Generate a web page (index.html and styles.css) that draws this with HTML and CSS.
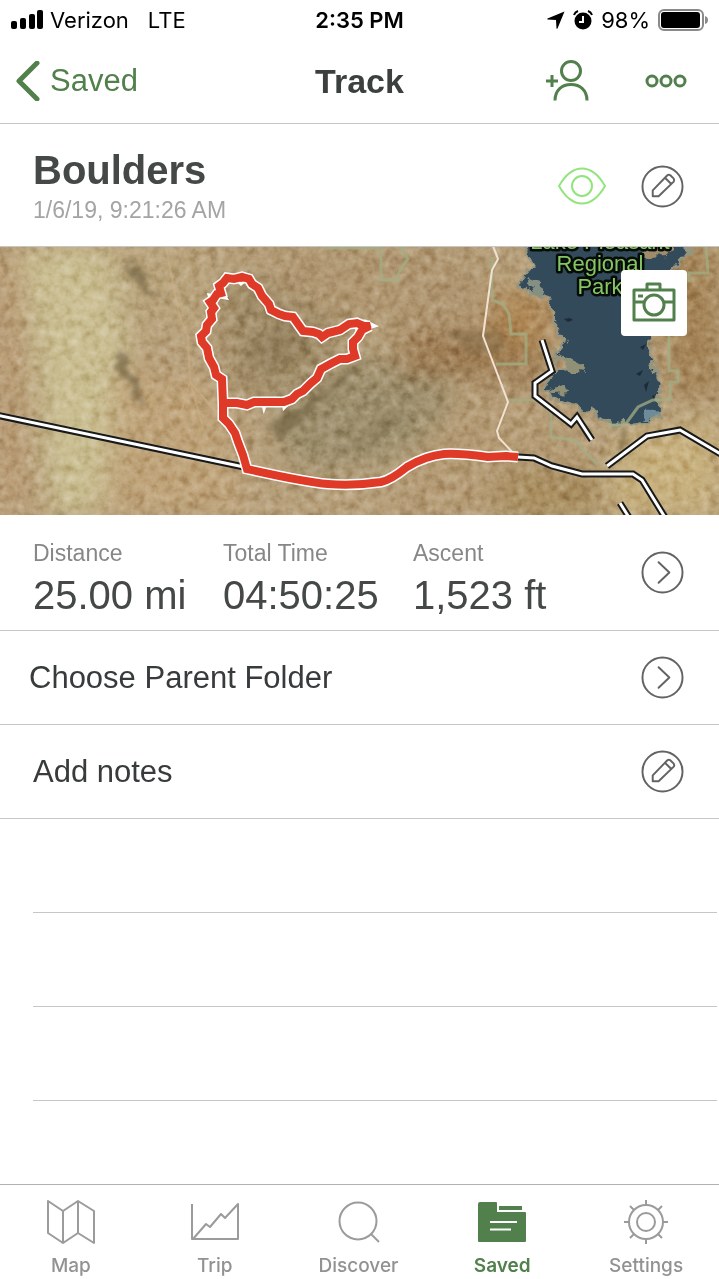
FILE: index.html
```html
<!DOCTYPE html>
<html lang="en">
<head>
    <meta charset="utf-8">
    <meta name="viewport" content="width=device-width, initial-scale=1">
    <title>Track</title>
    <link rel="stylesheet" href="styles.css">
</head>
<body>
    <!-- shared icons -->
    <svg class="defs" width="0" height="0">
        <symbol id="icon-pencil" viewBox="0 0 44 44">
            <circle cx="22" cy="22" r="20.500"/>
            <path d="M12 32V26L27 10.500Q28.500 9.500 30 10.500L33.500 14Q34.500 15.500 33.500 17L18 32ZM24.500 13L31 19.500"/>
        </symbol>
        <symbol id="icon-next" viewBox="0 0 44 44">
            <circle cx="22" cy="22" r="20.500"/>
            <path d="M18 11.500L29 22L18 32.500"/>
        </symbol>
    </svg>

    <div class="status">
        <div class="carrier">
            <svg width="32" height="20" viewBox="0 0 32 20">
                <rect x="0" y="11" width="6" height="8" rx="2"/>
                <rect x="9" y="8" width="6" height="11" rx="2"/>
                <rect x="18" y="4" width="6" height="15" rx="2"/>
                <rect x="26" y="0" width="6" height="19" rx="2"/>
            </svg>
            <span>Verizon</span>
            <span class="network">LTE</span>
        </div>
        <div class="clock">2:35 PM</div>
        <div class="power">
            <svg width="18" height="18" viewBox="0 0 18 18"><path d="M17.500 0.500L10.500 17.500Q10 18 9.500 17.500L9 9L0.500 8.500Q0 8 0.500 7.500Z"/></svg>
            <svg width="20" height="20" viewBox="0 0 20 20">
                <circle cx="10" cy="11" r="8.500"/>
                <path d="M1 5Q2 2 5 1M15 1Q18 2 19 5" fill="none" stroke="#000" stroke-width="2"/>
                <path d="M10 6V12H6" fill="none" stroke="#fff" stroke-width="2"/>
            </svg>
            <span>98%</span>
            <svg width="50" height="22" viewBox="0 0 50 22">
                <rect x="1" y="1" width="44" height="20" rx="5" fill="none" stroke="#8a8a8a" stroke-width="2"/>
                <rect x="3" y="3" width="39" height="16" rx="3"/>
                <path d="M47 7Q50 8 50 11Q50 14 47 15Z" fill="#8a8a8a"/>
            </svg>
        </div>
    </div>

    <header class="navbar">
        <a class="back" href="#saved">
            <svg width="24" height="40" viewBox="0 0 24 40"><path d="M21 2L3 20L21 38"/></svg>
            Saved
        </a>
        <h1>Track</h1>
        <div class="nav_buttons">
            <button type="button" aria-label="Share with a friend">
                <svg width="44" height="42" viewBox="0 0 44 42" stroke-width="3">
                    <circle cx="26" cy="11" r="9.500"/>
                    <path d="M10 40.500C10 30 17 24.500 26 24.500S42 30 42 40.500M1 21H13M7 15V27"/>
                </svg>
            </button>
            <button type="button" aria-label="More">
                <svg width="42" height="14" viewBox="0 0 42 14" stroke-width="3">
                    <circle cx="7" cy="7" r="5"/><circle cx="21" cy="7" r="5"/><circle cx="35" cy="7" r="5"/>
                </svg>
            </button>
        </div>
    </header>

    <main>
        <section class="title_row">
            <div>
                <h2>Boulders</h2>
                <p>1/6/19, 9:21:26 AM</p>
            </div>
            <div class="title_buttons">
                <button class="eye" type="button" aria-label="Show on map">
                    <svg width="48" height="38" viewBox="0 0 48 38">
                        <path d="M1 19Q11 1.500 24 1.500T47 19Q37 36.500 24 36.500T1 19Z"/>
                        <circle cx="24" cy="19" r="10"/>
                    </svg>
                </button>
                <button class="round" type="button" aria-label="Edit name"><svg><use href="#icon-pencil"/></svg></button>
            </div>
        </section>

        <section class="map">
            <svg class="terrain" viewBox="0 0 719 268" preserveAspectRatio="xMidYMid slice" role="img" aria-label="Track map">
                <defs>
                    <filter id="soft" x="-30%" y="-30%" width="160%" height="160%"><feGaussianBlur stdDeviation="14"/></filter>
                    <filter id="smudge" x="-20%" y="-20%" width="140%" height="140%" color-interpolation-filters="sRGB">
                        <feTurbulence type="fractalNoise" baseFrequency="0.06" numOctaves="3" seed="8" result="n"/>
                        <feDisplacementMap in="SourceGraphic" in2="n" scale="20" xChannelSelector="R" yChannelSelector="G"/>
                        <feGaussianBlur stdDeviation="2"/>
                    </filter>
                    <filter id="shore" x="-10%" y="-10%" width="120%" height="120%" color-interpolation-filters="sRGB">
                        <feTurbulence type="fractalNoise" baseFrequency="0.09" numOctaves="3" seed="5" result="n"/>
                        <feDisplacementMap in="SourceGraphic" in2="n" scale="16" xChannelSelector="R" yChannelSelector="G"/>
                        <feGaussianBlur stdDeviation="0.6"/>
                    </filter>
                    <filter id="grain" x="0" y="0" width="100%" height="100%" color-interpolation-filters="sRGB">
                        <feTurbulence type="fractalNoise" baseFrequency="0.11" numOctaves="5" seed="31"/>
                        <feColorMatrix values="0.9 0.6 0 0 -0.23  0.9 0.6 0 0 -0.23  0.9 0.6 0 0 -0.23  0 0 0 0 1"/>
                    </filter>
                </defs>
                <rect width="719" height="268" fill="#b59e79"/>
                <g filter="url(#soft)">
                    <path d="M0 0H18L25 268H0Z" fill="#b99a72"/>
                    <path d="M20 0H110L130 100L100 268H50L35 100Z" fill="#c9bd91"/>
                    <path d="M115 120L215 140L245 268H105Z" fill="#bda177"/>
                    <path d="M110 0H210L200 90L130 70Z" fill="#b7a27a"/>
                    <path d="M215 40L250 30L350 80L310 140L235 150Z" fill="#9e8965"/>
                    <path d="M260 0H480V90L380 70L290 50Z" fill="#af956f"/>
                    <path d="M270 160L360 110L440 120L460 180L380 220H290Z" fill="#9c8e6c"/>
                    <path d="M400 85H545V135L480 130H400Z" fill="#9c7a51"/>
                    <path d="M490 45H550V100H490Z" fill="#aa8250"/>
                    <path d="M480 135L560 145L600 180L580 268H400V215Z" fill="#b39a73"/>
                    <path d="M660 0H719V150H670Z" fill="#a38254"/>
                    <path d="M620 190L719 170V268H610Z" fill="#c6af7b"/>
                    <path d="M500 225H600V268H500Z" fill="#a68b5c"/>
                </g>
                <rect class="noise" width="719" height="268" filter="url(#grain)"/>
                <!-- rocky patches -->
                <g filter="url(#smudge)" fill="#6b5c3c" opacity=".6">
                    <path d="M113 112L122 107L130 120L140 137V155L130 147L125 130Z"/>
                    <path d="M128 12L138 20L148 40L160 52L147 47L135 35Z"/>
                    <path d="M272 178L305 155L345 128L368 108L360 122L325 150L278 189Z"/>
                    <path d="M278 188L308 165L287 192Z"/>
                    <path d="M300 235L390 165L410 172L360 205Z" opacity=".3"/>
                    <path d="M445 85L500 83L505 108L470 103Z" opacity=".5"/>
                    <path d="M617 205L622 190L630 184L626 197Z"/>
                    <path d="M240 105L290 70L315 100L270 130Z" opacity=".25"/>
                </g>
                <path d="M166 0L177 58L180 70L188 90L190 135L216 165M190 135L180 170M190 135L203 180" fill="none" stroke="#cdb083" stroke-width="2" opacity=".5"/>

                <!-- lake -->
                <g filter="url(#shore)">
                    <path d="M521 -8L532 20L520 35L530 48L547 52L554 66L555 82L562 98L553 107L570 122L552 128L542 143L562 155L588 163L608 175L634 178L658 172L659 128L648 110L654 88L668 70V30L689 5V-8Z" fill="#334a5b" stroke="#96957f" stroke-width="3"/>
                    <path d="M557 107L575 114L585 126L570 124ZM546 145L558 137L572 145L553 146Z" fill="#8f9075"/>
                    <path d="M528 32L540 35L545 49L534 50Z" fill="#859082"/>
                    <path d="M636 -5H670L668 10L645 11Z" fill="#a08c6b"/>
                    <path d="M640 172L646 163L658 162L657 172Z" fill="#6d8b98"/>
                </g>
                <g fill="#16242d" opacity=".8">
                    <path d="M564 72L570 71L573 73L568 75ZM636 127L643 123L640 129ZM644 138L649 134L646 145ZM640 100L646 97L643 103ZM652 149L656 147L654 154Z"/>
                </g>

                <!-- park boundary -->
                <path class="boundary" d="M325 1H381V33H398V27L402 20L408 12L403 4V0M400 0L408 12M492 10V53L503 57L509 67L511 87H526V117H496M508 153H539L551 165V190L575 193L586 206L598 218M607 178H625L638 160L653 153H670V135H678V124H669V88L667 70M689 35V26H708L706 0"/>

                <!-- thin road -->
                <path d="M493 -1L498 12L492 23L483 89L508 155L497 184L499 191L516 209" fill="none" stroke="#f1e2d2" stroke-width="2"/>

                <g class="road">
                    <path d="M-4 168L244 220M518 210L534 211L552 219L582 227H633L642 233L666 272M607 219L647 189L680 183L724 209M542 93L552 124L535 136V149L571 177L577 170L592 193M620 256L630 272"/>
                </g>
                <g class="road_inner">
                    <path d="M-4 168L244 220M518 210L534 211L552 219L582 227H633L642 233L666 272M607 219L647 189L680 183L724 209M542 93L552 124L535 136V149L571 177L577 170L592 193M620 256L630 272"/>
                </g>

                <g class="track">
                    <path id="track" d="M518 210L506 209L488 210Q458 206 444 207Q425 209 407 220Q391 233 381 235Q354 239 328 237Q305 235 247 222L243 208L238 195L235 186L229 177L223 171V156L222 132L216 128L214 120L209 111L207 101L202 95L201 89L206 84L207 78L212 72L211 65L214 61L210 55L213 53L217 47L221 46L219 39L223 36L227 31L234 32L242 30L249 32L252 37L258 41L262 49L269 57L271 63L279 67L285 69L293 70L298 77L303 84L313 85L319 87L322 90L328 86L340 83L349 77L357 76L364 79L370 79L362 83L358 90L353 95L353 102L355 109L347 112L340 112L332 116L321 122L317 131L310 137L303 144L297 147L292 152L284 155L274 155L264 155L254 155L247 158L237 156H223"/>
                    <path d="M211 54L209 48L221 50L226 51L221 43ZM235 30L242 28L246 33L241 37L238 34ZM350 76L365 74L375 79L359 84ZM283 154L284 161L291 154ZM262 154L264 162L267 154Z"/>
                </g>
                <use class="track_line" href="#track"/>
                <path d="M212 54L221 48L223 43ZM236 31L242 30L245 34L241 35ZM354 76L372 79L361 82Z" fill="#df3a27"/>

                <text class="place" y="2"><tspan x="600">Lake Pleasant</tspan><tspan x="600" dy="22">Regional</tspan><tspan x="600" dy="23">Park</tspan></text>
            </svg>
            <button class="camera" type="button" aria-label="Add photo">
                <svg width="44" height="42" viewBox="0 0 44 42">
                    <path d="M2 8H42V38H2ZM15 8V2H28V8M2 20H12M32 20H42M6 14H11"/>
                    <circle cx="22" cy="23" r="10"/>
                </svg>
            </button>
        </section>

        <section class="stats">
            <dl>
                <div><dt>Distance</dt><dd>25.00 mi</dd></div>
                <div><dt>Total Time</dt><dd>04:50:25</dd></div>
                <div><dt>Ascent</dt><dd>1,523 ft</dd></div>
            </dl>
            <button class="round" type="button" aria-label="All statistics"><svg><use href="#icon-next"/></svg></button>
        </section>
        <button class="row folder" type="button">
            Choose Parent Folder
            <span class="round"><svg><use href="#icon-next"/></svg></span>
        </button>
        <button class="row" type="button">
            Add notes
            <span class="round"><svg><use href="#icon-pencil"/></svg></span>
        </button>
        <div class="blank"></div>
        <div class="blank"></div>
        <div class="blank"></div>
    </main>

    <nav class="tabs">
        <a href="#map">
            <svg width="50" height="46" viewBox="0 0 50 46"><path d="M2 2L17 12L32 2L48 12V44L32 34L17 44L2 34ZM17 12V44M32 2V34"/></svg>
            Map
        </a>
        <a href="#trip">
            <svg width="50" height="46" viewBox="0 0 50 46"><path d="M2 5V40H48V5L35 19L31 15L20 28L16 25L3 40"/></svg>
            Trip
        </a>
        <a href="#discover">
            <svg width="50" height="46" viewBox="0 0 50 46"><circle cx="25" cy="22" r="18.500"/><path d="M38 35L46 43"/></svg>
            Discover
        </a>
        <a class="active" href="#saved" aria-current="page">
            <svg width="50" height="46" viewBox="0 0 50 46">
                <path class="fill" d="M3 3H19Q20 3 20 4V13H48Q49 13 49 14V42Q49 43 48 43H2Q1 43 1 42V5Q1 3 3 3ZM22 7H45V11H22Z"/>
                <path class="lines" d="M13 23H40M13 30.500H34"/>
            </svg>
            Saved
        </a>
        <a href="#settings">
            <svg width="50" height="46" viewBox="0 0 50 46">
                <circle cx="25" cy="23" r="17"/><circle cx="25" cy="23" r="9"/>
                <path d="M25 1V6M25 40V45M3 23H8M42 23H47M9 7L13 11M37 35L41 39M41 7L37 11M13 35L9 39"/>
            </svg>
            Settings
        </a>
    </nav>
</body>
</html>
```
FILE: styles.css
```css
body,h1,h2,p,dl,dt,dd,button{margin:0; padding:0; border:0;}
body{ min-height: 100vh; display: flex; flex-direction: column; background: #fff; color: #444847; font-family: "Liberation Sans", Arial, sans-serif;}
a{text-decoration: none;}
button{ background: none; color: inherit; font-family: inherit; cursor: pointer;}
svg{ display: block; flex: none;}
.defs{ position: absolute;}

/* status bar */
.status{ height: 40px; padding: 0 11px; display: grid; grid-template-columns: 1fr auto 1fr; align-items: center; color: #000; font-family: Inter, "Liberation Sans", sans-serif; font-size: 22px;}
.carrier{ display: flex; align-items: center; gap: 7px;}
.network{ margin-left: 12px;}
.clock{ font-weight: 600;}
.power{ display: flex; align-items: center; justify-content: flex-end; gap: 8px;}

/* header */
.navbar{ height: 81px; padding: 0 32px 2px 16px; display: grid; grid-template-columns: 1fr auto 1fr; align-items: center; border-bottom: 1px solid #c6c6c6;}
.navbar svg{ fill: none; stroke: #52804c;}
.back{ display: flex; align-items: center; gap: 10px; color: #52804c; font-size: 31px;}
.back svg{ stroke-width: 5; stroke-linecap: round; stroke-linejoin: round;}
.navbar h1{ margin-left: 16px; color: #3b3f3e; font-size: 34px; line-height: 38px;}
.nav_buttons{ display: flex; align-items: center; justify-content: flex-end; gap: 56px;}

/* name of the track */
.title_row{ height: 120px; padding: 2px 35px 0 33px; display: flex; align-items: center; justify-content: space-between; border-bottom: 1px solid #c6c6c6;}
.title_row h2{ font-size: 40px; line-height: 48px;}
.title_row p{ color: #a3a5a4; font-size: 23px; line-height: 32px;}
.title_buttons{ display: flex; align-items: center; gap: 35px;}
.eye svg{ fill: none; stroke: #92e57c; stroke-width: 2;}
.round{ width: 43px; height: 43px; flex: none;}
.round svg{ width: 100%; height: 100%; fill: none; stroke: #626464; stroke-width: 2; stroke-linejoin: round; stroke-linecap: round;}

/* map */
.map{ height: 268px; position: relative; overflow: hidden;}
.terrain{ width: 100%; height: 100%;}
.noise{ mix-blend-mode: soft-light; opacity: .6;}
.boundary{ fill: none; stroke: #a3ae84; stroke-width: 3; opacity: .75;}
.road{ fill: none; stroke: #17191a; stroke-width: 7;}
.road_inner{ fill: none; stroke: #fff; stroke-width: 3;}
.track{ fill: #fff; stroke: #fff; stroke-width: 11; stroke-linejoin: miter;}
.track path{ fill: none;}
.track path + path{ stroke-width: 3; fill: #fff;}
.track_line{ fill: none; stroke: #df3a27; stroke-width: 8;}
.place{ fill: #85c663; stroke: #080c08; stroke-width: 5; stroke-linejoin: round; paint-order: stroke; font-size: 22px; text-anchor: middle;}
.camera{ width: 66px; height: 66px; position: absolute; top: 23px; right: 32px; display: flex; align-items: center; justify-content: center; background: #fff; border-radius: 4px;}
.camera svg{ fill: none; stroke: #52804c; stroke-width: 3; stroke-linejoin: round;}

/* stats */
.stats{ height: 115px; padding: 0 35px 0 33px; display: flex; align-items: center; justify-content: space-between; border-bottom: 1px solid #c6c6c6;}
.stats dl{ flex: 1; max-width: 570px; padding-top: 8px; display: grid; grid-template-columns: repeat(3, 1fr);}
.stats dt{ color: #858887; font-size: 23px; line-height: 36px;}
.stats dd{ font-size: 40px; line-height: 48px;}

.row{ width: 100%; height: 94px; padding: 0 35px 0 33px; display: flex; align-items: center; justify-content: space-between; border-bottom: 1px solid #c6c6c6; color: #383b3b; font-size: 31px; text-align: left;}
.folder{ padding-left: 29px;}
.blank{ height: 93px; margin: 0 2px 0 33px; border-bottom: 1px solid #c6c6c6;}

/* tab bar */
.tabs{ height: 94px; margin-top: auto; display: grid; grid-template-columns: repeat(5, 1fr); border-top: 1px solid #b2b2b2;}
.tabs a{ padding: 14px 2px 0 0; display: flex; flex-direction: column; align-items: center; gap: 9px; color: #929292; font-family: Inter, "Liberation Sans", sans-serif; font-size: 19px; font-weight: 500; line-height: 24px;}
.tabs svg{ fill: none; stroke: #9b9b9b; stroke-width: 2; stroke-linejoin: round;}
.tabs .active{ color: #52804c; font-weight: 600;}
.tabs .fill{ fill: #52804c; stroke: none;}
.tabs .lines{ stroke: #fff;}
```
